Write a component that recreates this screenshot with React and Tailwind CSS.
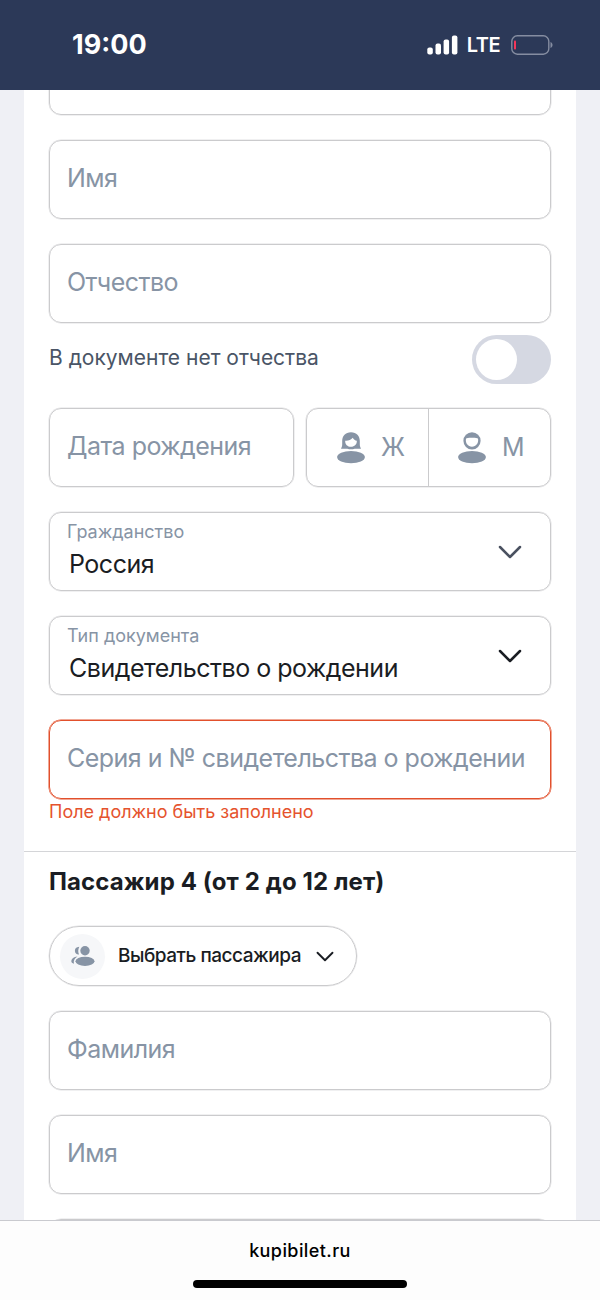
const Chevron = ({ className }) => (
  <svg viewBox="0 0 24 14" fill="none" className={className}>
    <path
      d="M2 2l10 10L22 2"
      stroke="currentColor"
      strokeWidth="2.5"
      strokeLinecap="round"
      strokeLinejoin="round"
    />
  </svg>
);

const WomanIcon = () => (
  <svg viewBox="0 0 28 32" className="w-7 h-8" fill="#8794a5">
    <path d="M14 .3C8.500.3 5.200 4 5.200 9v3.200c0 1.700-.4 2.900-1.200 4.500h6.300c1.200.4 2.400.6 3.700.6s2.500-.2 3.700-.6H24c-.8-1.600-1.200-2.800-1.200-4.500V9C22.800 4 19.500.3 14 .3z" />
    <path fill="#fff" d="M8.200 8.700c3 .3 5.600-.7 7.600-3 1 1.700 2.200 2.700 4 3.100.3 3.600-2.300 6-5.800 6s-6.100-2.500-5.800-6.100z" />
    <ellipse cx="14" cy="25.100" rx="13.900" ry="6.200" />
  </svg>
);

const ManIcon = () => (
  <svg viewBox="0 0 28 32" className="w-7 h-8" fill="#8794a5">
    <circle cx="14" cy="8.800" r="8.600" />
    <path fill="#fff" d="M8 6.600c1.200-.5 2.400-.8 3.500-.8h5c1.100 0 2.300.3 3.500.8.9 4.700-2 8.200-6 8.200s-6.900-3.500-6-8.200z" />
    <ellipse cx="14" cy="25.100" rx="13.900" ry="6.200" />
  </svg>
);

const PeopleIcon = () => (
  <svg viewBox="0 0 24 20" className="w-6 h-5" fill="#8794a5">
    <circle cx="14" cy="4.700" r="4.700" />
    <ellipse cx="14" cy="15.300" rx="9.500" ry="4.600" />
    <path d="M8.300.8C5.200.9 3.700 2.800 3.900 5c.2 2.200 1.800 3.800 4.100 3.500C6.900 6.200 7 3.200 8.300.8z" />
    <path d="M6.500 10.500C2.700 10.900.4 12.800.3 15c0 1.400.9 2.300 2.700 2.700-.8-2.700.5-5.300 3.500-7.200z" />
  </svg>
);

const Field = ({ label, error }) => (
  <div
    className={`h-[79px] shrink-0 rounded-xl border pl-[17px] pb-px flex items-center text-[25px] tracking-[-0.52px] text-[#8794a5] whitespace-nowrap ${
      error
        ? "border-[#e2502c] shadow-[0_0_0_0.5px_#e2502c]"
        : "border-[#cbcbcd] shadow-[0_0_0_0.5px_#e2e2e4]"
    }`}
  >
    {label}
  </div>
);

const SelectField = ({ label, value, dark }) => (
  <div className="h-[79px] shrink-0 rounded-xl border border-[#cbcbcd] shadow-[0_0_0_0.5px_#e2e2e4] pl-[17px] pr-7 flex items-center justify-between">
    <div className="whitespace-nowrap">
      <div className="text-[18px] leading-6 text-[#8794a5]">{label}</div>
      <div className="text-[25px] leading-10 pl-0.5 tracking-[-0.49px] text-[#1a1d23]">{value}</div>
    </div>
    <Chevron className={`w-6 h-3.5 ${dark ? "text-[#1a1d23]" : "text-[#4a5160]"}`} />
  </div>
);

const StatusBar = () => (
  <header className="h-[90px] shrink-0 bg-[#2c3958] text-white flex items-center justify-between pl-[72px] pr-[47px]">
    <span className="text-[27px] leading-8 font-bold">19:00</span>
    <div className="flex items-center pb-px">
      <svg viewBox="0 0 31 20" className="w-[31px] h-5" fill="#fff">
        <rect x="0.300" y="12.500" width="5.500" height="7" rx="2" />
        <rect x="8.500" y="8.500" width="5.500" height="11" rx="2" />
        <rect x="16.600" y="4.500" width="5.500" height="15" rx="2" />
        <rect x="24.900" y="0.500" width="5.500" height="19" rx="2" />
      </svg>
      <span className="ml-[9px] pt-px text-[20px] font-semibold tracking-[-0.5px]">LTE</span>
      <svg viewBox="0 0 42 20" className="ml-[11px] w-[42px] h-5" fill="none">
        <rect x="0.800" y="0.800" width="37" height="18.400" rx="5.500" stroke="#858da1" strokeWidth="1.400" />
        <rect x="3" y="5.500" width="2" height="9" rx="0.800" fill="#f5365a" />
        <path d="M39.500 7v6c1.300-.5 2-1.600 2-3s-.7-2.500-2-3z" fill="#858da1" />
      </svg>
    </div>
  </header>
);

export default function App() {
  return (
    <div className="w-[600px] h-[1300px] flex flex-col overflow-hidden bg-[#eff0f5] font-['Inter','Liberation_Sans',sans-serif]">
      <StatusBar />

      <main className="h-[1130px] shrink-0 mx-6 bg-white overflow-hidden">
        {/* Пассажир 3 */}
        <section className="px-[25px] flex flex-col gap-[25px] -mt-[54.500px]">
          <Field />
          <Field label="Имя" />
          <Field label="Отчество" />
        </section>

        <div className="px-[25px] mt-[12.500px] h-[49px] flex items-center justify-between">
          <span className="text-[21px] text-[#4a5566] whitespace-nowrap pb-[3px]">
            В документе нет отчества
          </span>
          <div className="w-[79px] h-[49px] rounded-full bg-[#d5d8e2] p-1">
            <div className="size-[41px] rounded-full bg-white" />
          </div>
        </div>

        <section className="px-[25px] flex flex-col gap-[25px] mt-6">
          <div className="flex gap-3">
            <div className="w-[245px]">
              <Field label="Дата рождения" />
            </div>
            <div className="w-[245px] h-[79px] rounded-xl border border-[#cbcbcd] shadow-[0_0_0_0.5px_#e2e2e4] flex text-[25px] text-[#8794a5]">
              <div className="w-[122px] border-r border-[#cbcbcd] flex items-center pl-[30px] gap-4">
                <WomanIcon />
                <span>Ж</span>
              </div>
              <div className="flex-1 flex items-center pl-[29px] gap-4">
                <ManIcon />
                <span>М</span>
              </div>
            </div>
          </div>
          <SelectField label="Гражданство" value="Россия" />
          <SelectField label="Тип документа" value="Свидетельство о рождении" dark />
          <Field label="Серия и № свидетельства о рождении" error />
        </section>

        <p className="px-[25px] h-[52px] pt-px text-[18px] leading-6 text-[#e5532d] whitespace-nowrap">
          Поле должно быть заполнено
        </p>

        {/* Пассажир 4 */}
        <section className="border-t border-[#d4d5d8] px-[25px] flex flex-col gap-[25px]">
          <h2 className="h-[49px] pt-[14px] text-[24px] leading-8 font-bold tracking-[0.1px] text-[#1a1d23] whitespace-nowrap">
            Пассажир 4 (от 2 до 12 лет)
          </h2>
          <button className="w-[308px] h-[60px] rounded-full border border-[#cbcbcd] shadow-[0_0_0_0.5px_#e2e2e4] flex items-center pl-2.5">
            <span className="size-[45px] rounded-full bg-[#f6f7f9] flex items-center justify-center">
              <PeopleIcon />
            </span>
            <span className="ml-[13px] w-[185px] text-left text-[19px] font-medium tracking-[-0.48px] text-[#1a1d23] whitespace-nowrap">
              Выбрать пассажира
            </span>
            <Chevron className="ml-[13px] w-[18px] h-[11px] text-[#1a1d23]" />
          </button>
          <Field label="Фамилия" />
          <Field label="Имя" />
          <Field />
        </section>
      </main>

      <footer className="h-20 shrink-0 bg-[#fdfdfd] border-t border-[#c9cacf] flex flex-col items-center justify-between pt-[18px] pb-3">
        <span className="text-[18px] leading-6 font-medium tracking-[0.42px] text-black">kupibilet.ru</span>
        <div className="w-[214px] h-2 rounded-full bg-black" />
      </footer>
    </div>
  );
}
